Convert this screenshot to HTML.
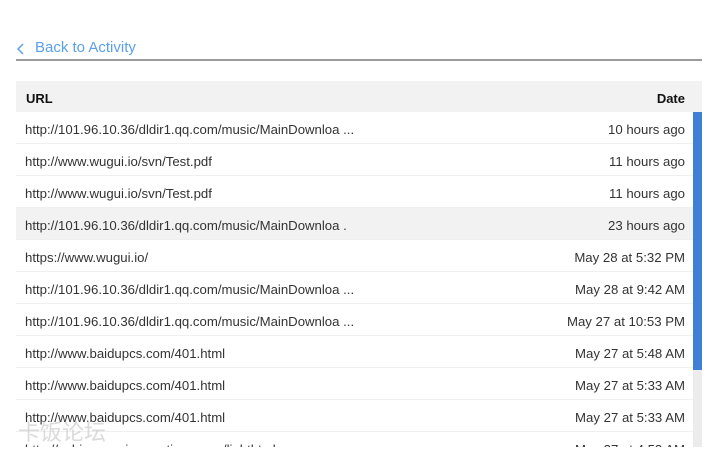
<!DOCTYPE html>
<html><head><meta charset="utf-8"><style>
body{margin:0;width:719px;height:452px;background:#fff;font-family:"Segoe UI","Liberation Sans",sans-serif;overflow:hidden;position:relative}
.back{position:absolute;left:16px;top:39px;font-size:15px;color:#5ba0e8}
.back span{margin-left:19px}
.line{position:absolute;left:16px;top:59px;width:686px;height:2px;background:#9a9a9a}
.tbl{position:absolute;left:16px;top:81px;width:686px;height:366px;overflow:hidden}
.hd{height:31px;background:#f2f2f2;font-weight:bold;font-size:13px;color:#111;display:flex;justify-content:space-between;align-items:center;padding:3px 17px 0 10px;box-sizing:border-box}
.r{height:32px;box-sizing:border-box;border-bottom:1px solid #efefef;display:flex;justify-content:space-between;align-items:center;padding:3px 8px 0 9px;font-size:13.2px;color:#333;margin-right:9px}
.r.h{background:#f2f2f2}
.sb{position:absolute;left:693px;top:112px;width:9px;height:335px;background:#ececec}
.sb div{height:258px;background:#3f80d6}
.wm{position:absolute;left:18px;top:415px;font-size:22px;color:#ccc;font-family:"Noto Sans CJK SC",sans-serif;opacity:.7}
</style></head><body>
<div class="back"><svg width="8" height="12" style="position:absolute;left:1px;top:4px"><path d="M6 1 L1 6 L6 11" stroke="#5ba0e8" stroke-width="1.5" fill="none"/></svg><span>Back to Activity</span></div>
<div class="line"></div>
<div class="tbl">
<div class="hd"><span>URL</span><span>Date</span></div>
<div class="r"><span>http://101.96.10.36/dldir1.qq.com/music/MainDownloa ...</span><span>10 hours ago</span></div>
<div class="r"><span>http://www.wugui.io/svn/Test.pdf</span><span>11 hours ago</span></div>
<div class="r"><span>http://www.wugui.io/svn/Test.pdf</span><span>11 hours ago</span></div>
<div class="r h"><span>http://101.96.10.36/dldir1.qq.com/music/MainDownloa .</span><span>23 hours ago</span></div>
<div class="r"><span>https://www.wugui.io/</span><span>May 28 at 5:32 PM</span></div>
<div class="r"><span>http://101.96.10.36/dldir1.qq.com/music/MainDownloa ...</span><span>May 28 at 9:42 AM</span></div>
<div class="r"><span>http://101.96.10.36/dldir1.qq.com/music/MainDownloa ...</span><span>May 27 at 10:53 PM</span></div>
<div class="r"><span>http://www.baidupcs.com/401.html</span><span>May 27 at 5:48 AM</span></div>
<div class="r"><span>http://www.baidupcs.com/401.html</span><span>May 27 at 5:33 AM</span></div>
<div class="r"><span>http://www.baidupcs.com/401.html</span><span>May 27 at 5:33 AM</span></div>
<div class="r"><span>http://nchina.music.sanctions.com/lighthtml</span><span>May 27 at 4:53 AM</span></div>
</div>
<div class="sb"><div></div></div>
<div class="wm">卡饭论坛</div>
</body></html>
